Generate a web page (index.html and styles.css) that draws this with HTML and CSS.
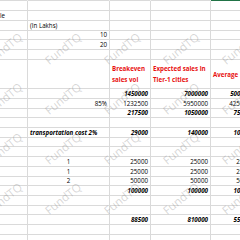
FILE: index.html
```html
<!DOCTYPE html>
<html>
<head>
<meta charset="utf-8">
<link rel="stylesheet" href="styles.css">
</head>
<body>
<div class="sheet">
  <div class="row h1 top"><div></div><div></div><div></div><div></div><div class="sel"></div></div>
  <div class="row h10"><div></div><div></div><div></div><div></div><div></div></div>
  <div class="row h10"><div class="flush">le</div><div></div><div></div><div></div><div></div></div>
  <div class="row h9"><div></div><div>(In Lakhs)</div><div></div><div></div><div></div></div>
  <div class="row h10"><div></div><div class="r">10</div><div></div><div></div><div></div></div>
  <div class="row h10"><div></div><div class="r">20</div><div></div><div></div><div></div></div>
  <div class="row h10"><div></div><div></div><div></div><div></div><div></div></div>
  <div class="row h29"><div></div><div></div><div class="hd">Breakeven<br>sales vol</div><div class="hd">Expected sales in<br>Tier-1 cities</div><div class="hd">Average</div></div>
  <div class="row h10"><div></div><div></div><div class="r bi">1450000</div><div class="r bi">7000000</div><div class="r bi">5000000</div></div>
  <div class="row h9"><div></div><div class="r">85%</div><div class="r">1232500</div><div class="r">5950000</div><div class="r">4250000</div></div>
  <div class="row h10"><div></div><div></div><div class="r bi">217500</div><div class="r bi">1050000</div><div class="r bi">750000</div></div>
  <div class="row h10"><div></div><div></div><div></div><div></div><div></div></div>
  <div class="row h9"><div></div><div class="bi">transportation cost 2%</div><div class="r bi">29000</div><div class="r bi">140000</div><div class="r bi">100000</div></div>
  <div class="row h10"><div></div><div></div><div></div><div></div><div></div></div>
  <div class="row h10"><div></div><div></div><div></div><div></div><div></div></div>
  <div class="row h10"><div></div><div class="m">1</div><div class="r">25000</div><div class="r">25000</div><div class="r">25000</div></div>
  <div class="row h9"><div></div><div class="m">1</div><div class="r">25000</div><div class="r">25000</div><div class="r">25000</div></div>
  <div class="row h10"><div></div><div class="m">2</div><div class="r">50000</div><div class="r">50000</div><div class="r">50000</div></div>
  <div class="row h10"><div></div><div></div><div class="r bi">100000</div><div class="r bi">100000</div><div class="r bi">100000</div></div>
  <div class="row h10"><div></div><div></div><div></div><div></div><div></div></div>
  <div class="row h9"><div></div><div></div><div></div><div></div><div></div></div>
  <div class="row h10"><div></div><div></div><div class="r bi">88500</div><div class="r bi">810000</div><div class="r bi">550000</div></div>
  <div class="row h10"><div></div><div></div><div></div><div></div><div></div></div>
  <div class="row h10"><div></div><div></div><div></div><div></div><div></div></div>

  <div class="wm">
    <span>FundTQ</span><span>FundTQ</span><span>FundTQ</span><span>FundTQ</span><span>FundTQ</span>
    <span>FundTQ</span><span>FundTQ</span><span>FundTQ</span><span>FundTQ</span><span>FundTQ</span>
    <span>FundTQ</span><span>FundTQ</span><span>FundTQ</span><span>FundTQ</span><span>FundTQ</span>
    <span>FundTQ</span><span>FundTQ</span><span>FundTQ</span><span>FundTQ</span><span>FundTQ</span>
  </div>
</div>
</body>
</html>
```

FILE: styles.css
```css
html, body {
  margin: 0;
  padding: 0;
  overflow: hidden;
  background: #ffffff;
}
body {
  font-family: "Open Sans", "Liberation Sans", sans-serif;
  font-size: 6.2px;
  color: #000000;
}
.sheet {
  position: relative;
  width: 257px;
}
.row {
  display: grid;
  grid-template-columns: 28px 82px 41px 60px 46px;
}
.row > div {
  box-sizing: border-box;
  border-right: 1px solid #dadada;
  border-bottom: 1px solid #dadada;
  display: flex;
  align-items: center;
  padding: 0 2px;
  white-space: nowrap;
  line-height: 9px;
  min-width: 0;
}
.h1 { height: 1px; }
.h9 { height: 9px; }
.h10 { height: 10px; }
.h29 { height: 29px; }
.top > div { border-right-color: transparent; }
.top > .sel { border-bottom-color: #217346; }
.flush { padding-left: 0 !important; }
.r { justify-content: flex-end; }
.m { justify-content: center; }
.bi { font-weight: 700; font-style: italic; }
.hd {
  color: #e81010;
  font-weight: 700;
  line-height: 11px !important;
}
.wm {
  position: absolute;
  left: -26px;
  top: 23px;
  display: grid;
  grid-template-columns: repeat(5, 59px);
  grid-auto-rows: 50px;
  pointer-events: none;
}
.wm span {
  display: flex;
  align-items: center;
  justify-content: center;
  transform: rotate(-39deg);
  font-family: "Open Sans", sans-serif;
  font-size: 11.5px;
  color: rgba(140, 140, 140, 0.36);
  white-space: nowrap;
}
```
